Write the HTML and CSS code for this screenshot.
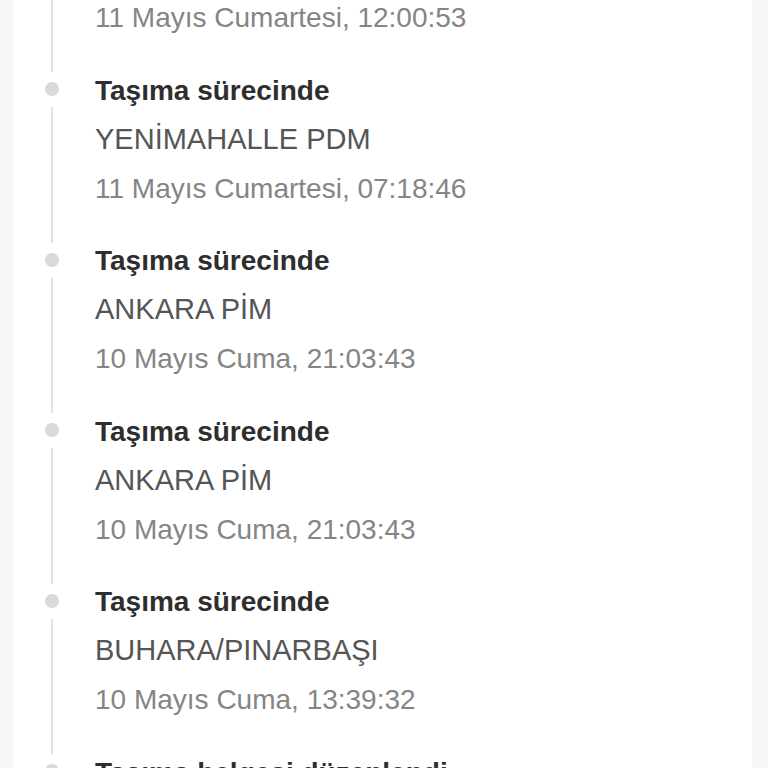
FILE: index.html
```html
<!DOCTYPE html>
<html lang="tr">
<head>
<meta charset="UTF-8">
<title>Gönderi Hareketleri</title>
<link rel="stylesheet" href="styles.css">
</head>
<body>
<div class="card">
	<ul class="timeline">
		<li class="step">
			<div class="rail"><span class="dot"></span><span class="line"></span></div>
			<div class="info">
				<div class="status">Teslimat şubesinde</div>
				<div class="place">YENİMAHALLE PDM</div>
				<div class="date">11 Mayıs Cumartesi, 12:00:53</div>
			</div>
		</li>
		<li class="step">
			<div class="rail"><span class="dot"></span><span class="line"></span></div>
			<div class="info">
				<div class="status">Taşıma sürecinde</div>
				<div class="place">YENİMAHALLE PDM</div>
				<div class="date">11 Mayıs Cumartesi, 07:18:46</div>
			</div>
		</li>
		<li class="step">
			<div class="rail"><span class="dot"></span><span class="line"></span></div>
			<div class="info">
				<div class="status">Taşıma sürecinde</div>
				<div class="place">ANKARA PİM</div>
				<div class="date">10 Mayıs Cuma, 21:03:43</div>
			</div>
		</li>
		<li class="step">
			<div class="rail"><span class="dot"></span><span class="line"></span></div>
			<div class="info">
				<div class="status">Taşıma sürecinde</div>
				<div class="place">ANKARA PİM</div>
				<div class="date">10 Mayıs Cuma, 21:03:43</div>
			</div>
		</li>
		<li class="step">
			<div class="rail"><span class="dot"></span><span class="line"></span></div>
			<div class="info">
				<div class="status">Taşıma sürecinde</div>
				<div class="place">BUHARA/PINARBAŞI</div>
				<div class="date">10 Mayıs Cuma, 13:39:32</div>
			</div>
		</li>
		<li class="step">
			<div class="rail"><span class="dot"></span></div>
			<div class="info">
				<div class="status">Taşıma belgesi düzenlendi</div>
				<div class="place">BUHARA/PINARBAŞI</div>
				<div class="date">10 Mayıs Cuma, 11:12:05</div>
			</div>
		</li>
	</ul>
</div>
</body>
</html>
```

FILE: styles.css
```css
html, body {margin: 0;
		background-color: #f7f7f7;
		overflow: hidden;}

.card {margin: 0 16px 0 14px;
		min-height: 768px;
		background-color: #ffffff;
		font-family: "Liberation Sans", Arial, sans-serif;}

/* 스크롤된 상태처럼 첫 항목 위쪽을 잘라낸다 */
.timeline {list-style: none;
		margin: -105px 0 0 0;
		padding: 0 0 0 31px;}

.step {display: flex;
		gap: 36px;
		height: 170.5px;}

.rail {display: flex;
		flex-direction: column;
		align-items: center;
		width: 14px;
		flex: none;}

.dot {width: 14px;
		height: 14px;
		margin-top: 16.5px;
		border-radius: 50%;
		background-color: #d9d9d9;
		flex: none;}

.line {flex: 1;
		width: 2px;
		margin-top: 11px;
		margin-bottom: -6.5px;
		background-color: #e2e2e2;}

.info {font-size: 28px;
		line-height: 49px;
		white-space: nowrap;}

.status {font-weight: bold;
		color: #2e2e2e;}

.place {font-size: 29px;
		color: #555555;}

.date {color: #858585;}
```
